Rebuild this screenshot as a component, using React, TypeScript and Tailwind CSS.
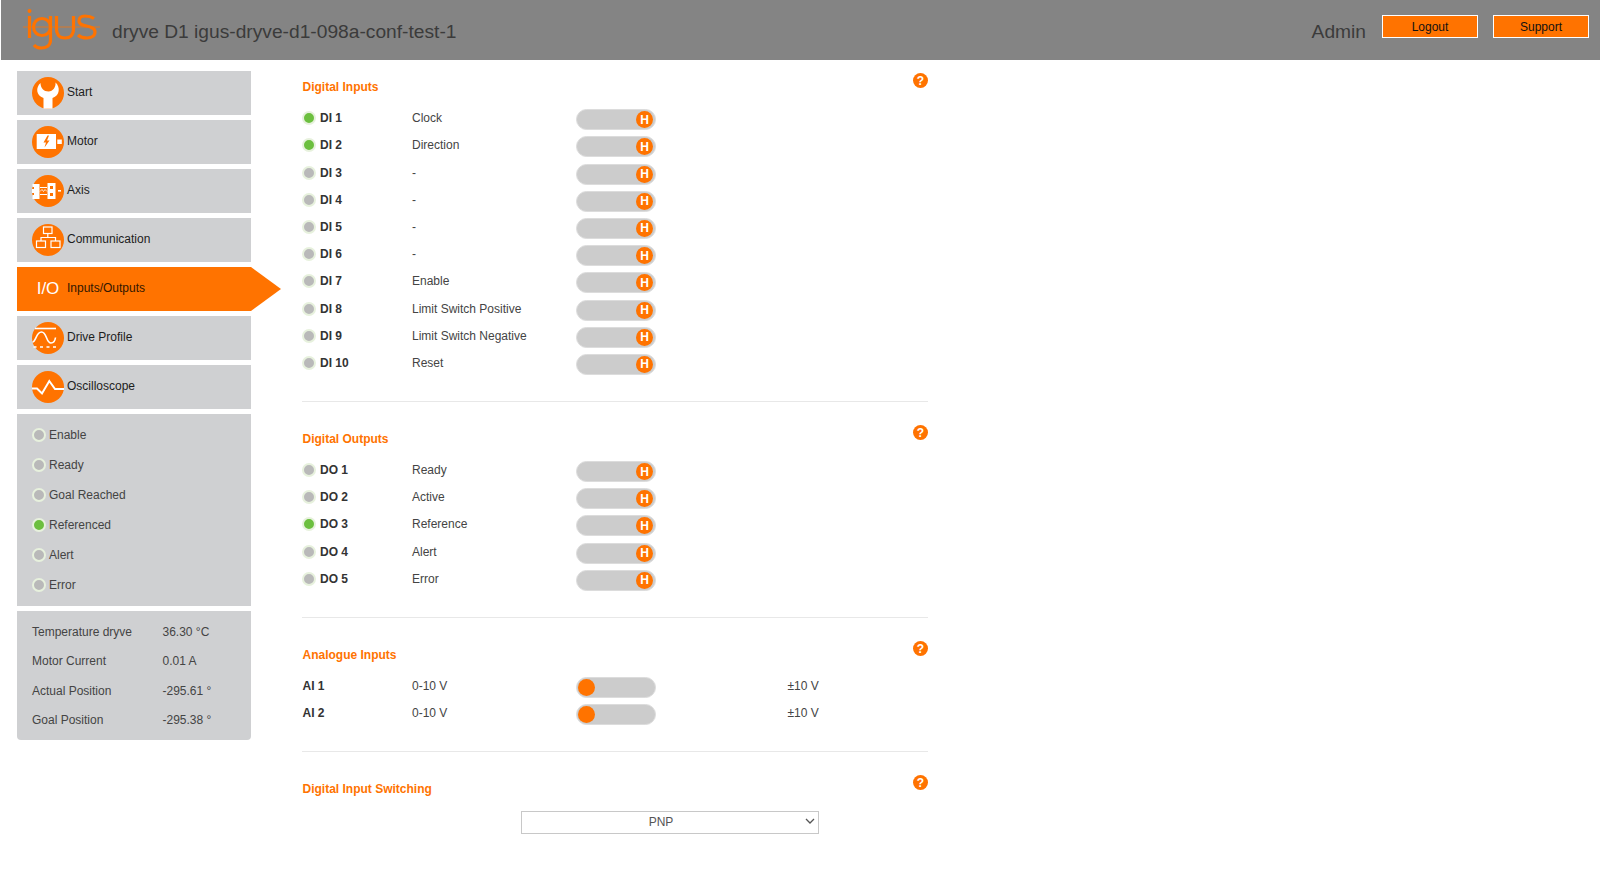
const menu = [
  { label: "Start", icon: <WrenchIcon /> },
  { label: "Motor", icon: <MotorIcon /> },
  { label: "Axis", icon: <AxisIcon /> },
  { label: "Communication", icon: <NetworkIcon /> },
  { label: "Inputs/Outputs", active: true },
  { label: "Drive Profile", icon: <ProfileIcon /> },
  { label: "Oscilloscope", icon: <ScopeIcon /> },
];

const states = [
  { label: "Enable", on: false },
  { label: "Ready", on: false },
  { label: "Goal Reached", on: false },
  { label: "Referenced", on: true },
  { label: "Alert", on: false },
  { label: "Error", on: false },
];

const readings = [
  ["Temperature dryve", "36.30 °C"],
  ["Motor Current", "0.01 A"],
  ["Actual Position", "-295.61 °"],
  ["Goal Position", "-295.38 °"],
];

const digitalInputs = [
  { name: "DI 1", text: "Clock", on: true },
  { name: "DI 2", text: "Direction", on: true },
  { name: "DI 3", text: "-" },
  { name: "DI 4", text: "-" },
  { name: "DI 5", text: "-" },
  { name: "DI 6", text: "-" },
  { name: "DI 7", text: "Enable" },
  { name: "DI 8", text: "Limit Switch Positive" },
  { name: "DI 9", text: "Limit Switch Negative" },
  { name: "DI 10", text: "Reset" },
];

const digitalOutputs = [
  { name: "DO 1", text: "Ready" },
  { name: "DO 2", text: "Active" },
  { name: "DO 3", text: "Reference", on: true },
  { name: "DO 4", text: "Alert" },
  { name: "DO 5", text: "Error" },
];

function WrenchIcon() {
  return (
    <svg viewBox="0 0 32 32" className="h-8 w-8">
      <circle cx="16" cy="16" r="16" fill="#ff7300" />
      <path
        d="M8.5 6C3.5 10.5 4 18.5 11.5 21V31.8H20.5V21C28 18.5 28.5 10 23.5 5.5C24 10 21 14.5 16.5 14.5C12 14.5 8.5 11 8.5 6Z"
        fill="#fff"
      />
    </svg>
  );
}

function MotorIcon() {
  return (
    <svg viewBox="0 0 32 32" className="h-8 w-8">
      <circle cx="16" cy="16" r="16" fill="#ff7300" />
      <rect x="4.7" y="8" width="19.3" height="15" fill="#fff" />
      <rect x="25.3" y="13.5" width="4.5" height="4.5" fill="#fff" />
      <path d="M15.5 9.5L11.5 16.5H14L12.5 21.5L17.5 14.5H15L17 9.5Z" fill="#ff7300" />
    </svg>
  );
}

function AxisIcon() {
  return (
    <svg viewBox="0 0 32 32" className="h-8 w-8">
      <circle cx="16" cy="16" r="16" fill="#ff7300" />
      <path d="M0.5 9H7.5V24H0.5V20H2V18H0V14H2V12H0.5Z" fill="#fff" />
      <rect x="15.5" y="8" width="8" height="16" fill="#fff" />
      <rect x="18" y="11" width="3" height="3" fill="#ff7300" />
      <rect x="18" y="18" width="3" height="3" fill="#ff7300" />
      <rect x="26" y="15" width="3" height="1.6" fill="#fff" />
      <path d="M8 12.5H15M8 19.5H15" stroke="#fff" strokeWidth="1" />
      <path d="M8 16.5L10 14.5L11.5 16.5L13 14.5L15 16.5" stroke="#fff" strokeWidth="0.8" fill="none" />
    </svg>
  );
}

function NetworkIcon() {
  return (
    <svg viewBox="0 0 32 32" className="h-8 w-8">
      <circle cx="16" cy="16" r="16" fill="#ff7300" />
      <g fill="none" stroke="#fff" strokeWidth="1.2">
        <rect x="11.5" y="3" width="8.5" height="6.5" />
        <rect x="4.5" y="17" width="9" height="6.5" />
        <rect x="19" y="17" width="9" height="6.5" />
        <path d="M15.8 9.5V13.5M9 17V13.5H23.5V17" />
      </g>
    </svg>
  );
}

function ProfileIcon() {
  return (
    <svg viewBox="0 0 32 32" className="h-8 w-8">
      <circle cx="16" cy="16" r="16" fill="#ff7300" />
      <g fill="none" stroke="#fff" strokeWidth="1.6">
        <path d="M3 6.5H24" />
        <path d="M0.5 20C4 20 4 10 9.5 10C15 10 14 21 19 21C22 21 23 19 23.5 15.5" />
        <path d="M1.5 25H24" strokeDasharray="3 3.5" />
      </g>
    </svg>
  );
}

function ScopeIcon() {
  return (
    <svg viewBox="0 0 32 32" className="h-8 w-8">
      <circle cx="16" cy="16" r="16" fill="#ff7300" />
      <path
        d="M0 17.5H5L10 22.5L17.3 10L23 18H32"
        fill="none"
        stroke="#fff"
        strokeWidth="2"
      />
    </svg>
  );
}

function Logo() {
  return (
    <svg viewBox="0 0 85 48" className="h-12 w-[85px] shrink-0">
      <g fill="none" stroke="#ff7300" strokeWidth="3.2">
        <path d="M9.5 10V32" />
        <circle cx="22" cy="21" r="8.5" />
        <path d="M30.5 10V34C30.5 40 26 42 21.5 42C18 42 15.5 41 14 39" />
        <path d="M36.5 10V23C36.5 29 40 32 45 32C50 32 53.5 29 53.5 23V10" />
        <path d="M74 12.5C71 10.5 68 10 65 10C61 10 59 12 59 15C59 22 75 18 75 26C75 30 71 32 67 32C63 32 60 31 58 29" />
      </g>
      <circle cx="9.5" cy="5" r="2" fill="#ff7300" />
      <path d="M3 21H80" stroke="#ff7300" strokeWidth="0.7" />
    </svg>
  );
}

function Led({ on }: { on?: boolean }) {
  return (
    <span
      className={`h-[14px] w-[14px] shrink-0 rounded-full border-2 border-[#e7f1dd] ${on ? "bg-[#6cbf3f]" : "bg-[#b9b9b9]"}`}
    />
  );
}

function Toggle() {
  return (
    <div className="mt-px flex h-[21px] w-[80px] items-center justify-end rounded-full border border-[#dcdcdc] bg-[#cccccc] pr-[2px]">
      <span className="flex h-[17px] w-[17px] items-center justify-center rounded-full bg-[#ff7300] text-[12px] font-bold text-white">
        H
      </span>
    </div>
  );
}

function AnalogToggle() {
  return (
    <div className="mt-px flex h-[21px] w-[80px] items-center rounded-full border border-[#dcdcdc] bg-[#cccccc] pl-px">
      <span className="h-[17px] w-[17px] rounded-full bg-[#ff7300]" />
    </div>
  );
}

function SectionHead({ title }: { title: string }) {
  return (
    <div className="flex h-[34px] items-start justify-between">
      <h2 className="mt-[5px] pl-[0.5px] text-[12px] leading-4 font-bold text-[#ff7300]">{title}</h2>
      <span className="-mt-px flex h-[15px] w-[15px] items-center justify-center rounded-full bg-[#ff7300] text-[12px] font-bold text-white">
        ?
      </span>
    </div>
  );
}

function IoRow({ name, text, on }: { name: string; text: string; on?: boolean }) {
  return (
    <div className="flex h-[27.2px] items-start text-[12px] leading-5">
      <div className="flex w-[110px] items-center gap-[4px] pt-[3px] leading-[14px]">
        <Led on={on} />
        <span className="font-bold text-[#333]">{name}</span>
      </div>
      <div className="w-[164px] text-[#444]">{text}</div>
      <Toggle />
    </div>
  );
}

export default function App() {
  return (
    <div className="min-h-[870px] bg-white font-['Liberation_Sans',Arial,sans-serif]">
      <header className="ml-px flex h-[60px] items-center bg-[#848484] pr-[11px] text-[#3b3b3b]">
        <div className="ml-[19px]">
          <Logo />
        </div>
        <div className="mt-[4px] ml-[7px] text-[19.2px]">dryve D1 igus-dryve-d1-098a-conf-test-1</div>
        <div className="mt-[4px] ml-auto text-[19.2px]">Admin</div>
        <button className="mb-[7px] ml-[16px] h-[23px] w-[96px] border border-white bg-[#ff7300] text-[12px] text-[#111]">
          Logout
        </button>
        <button className="mb-[7px] ml-[15px] h-[23px] w-[96px] border border-white bg-[#ff7300] text-[12px] text-[#111]">
          Support
        </button>
      </header>

      <div className="flex">
        <aside className="ml-[17px] flex w-[234px] shrink-0 flex-col gap-[5px] pt-[11px] text-[12px]">
          {menu.map((item) => (
            <div
              key={item.label}
              className={`relative flex h-[44px] items-center pl-[15px] ${item.active ? "bg-[#ff7300] text-[#331700]" : "bg-[#cfd0d2] text-[#1d1d1d]"}`}
            >
              {item.active ? (
                <span className="flex h-8 w-8 items-center justify-center text-[17px] text-white">I/O</span>
              ) : (
                item.icon
              )}
              <span className="mb-[3px] ml-[3px]">{item.label}</span>
              {item.active && (
                <span className="absolute top-0 left-full h-0 w-0 border-y-[22px] border-l-[30px] border-y-transparent border-l-[#ff7300]" />
              )}
            </div>
          ))}

          <div className="flex h-[192px] flex-col bg-[#cfd0d2] px-[15px] pt-[6px] text-[#444]">
            {states.map((s) => (
              <div key={s.label} className="flex h-[30px] items-center gap-[3px]">
                <Led on={s.on} />
                <span className="mb-[1px]">{s.label}</span>
              </div>
            ))}
          </div>

          <div className="h-[129px] rounded-b-sm bg-[#cfd0d2] px-[15px] pt-[6.6px] text-[#444]">
            {readings.map(([label, value]) => (
              <div key={label} className="flex h-[29.2px] items-center">
                <span className="w-[130.5px]">{label}</span>
                <span>{value}</span>
              </div>
            ))}
          </div>
        </aside>

        <main className="ml-[51px] w-[626px] pt-[14.2px]">
          <section className="border-b border-[#e8e8e8] pb-[21px]">
            <SectionHead title="Digital Inputs" />
            {digitalInputs.map((row) => (
              <IoRow key={row.name} {...row} />
            ))}
          </section>

          <section className="mt-[24px] border-b border-[#e8e8e8] pb-[21px]">
            <SectionHead title="Digital Outputs" />
            {digitalOutputs.map((row) => (
              <IoRow key={row.name} {...row} />
            ))}
          </section>

          <section className="mt-[24px] border-b border-[#e8e8e8] pb-[21px]">
            <SectionHead title="Analogue Inputs" />
            {["AI 1", "AI 2"].map((name) => (
              <div key={name} className="flex h-[27.2px] items-start text-[12px] leading-5">
                <div className="w-[110px] pl-[0.5px] font-bold text-[#333]">{name}</div>
                <div className="w-[163.5px] text-[#444]">0-10 V</div>
                <AnalogToggle />
                <div className="ml-[132px] text-[#444]">±10 V</div>
              </div>
            ))}
          </section>

          <section className="mt-[24px]">
            <SectionHead title="Digital Input Switching" />
            <div className="relative -mt-px ml-[219px] w-[298px]">
              <select className="h-[23px] w-full appearance-none border border-[#c8c8c8] bg-white pr-[18px] text-center text-[12px] text-[#555]">
                <option>PNP</option>
                <option>NPN</option>
              </select>
              <svg viewBox="0 0 10 6" className="pointer-events-none absolute top-[9px] right-[4px] h-[6px] w-[10px]">
                <path d="M1 1L5 5L9 1" fill="none" stroke="#555" strokeWidth="1.3" />
              </svg>
            </div>
          </section>
        </main>
      </div>
    </div>
  );
}
